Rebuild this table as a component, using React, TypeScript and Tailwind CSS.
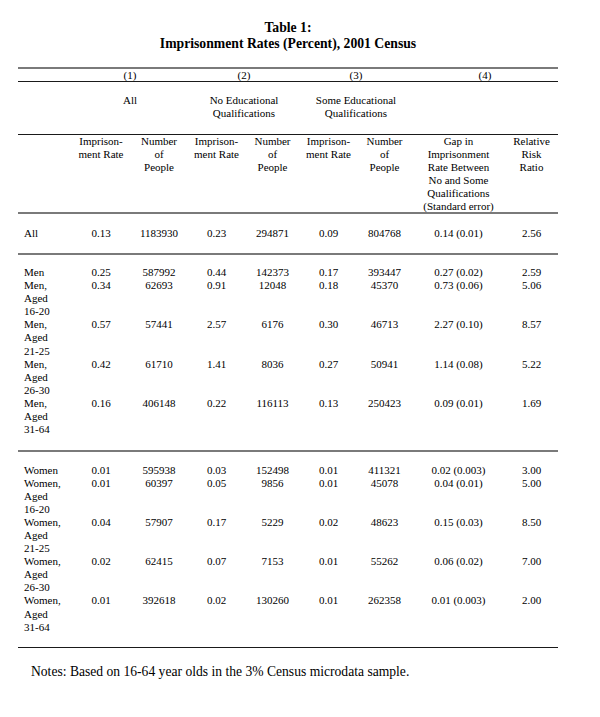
import React from "react";

const cols = "grid grid-cols-[54px_58px_58px_57px_55px_57px_55px_93px_53px]";

type Row = { label: string[]; v: string[] };

const men: Row[] = [
  { label: ["Men"], v: ["0.25", "587992", "0.44", "142373", "0.17", "393447", "0.27 (0.02)", "2.59"] },
  { label: ["Men,", "Aged", "16-20"], v: ["0.34", "62693", "0.91", "12048", "0.18", "45370", "0.73 (0.06)", "5.06"] },
  { label: ["Men,", "Aged", "21-25"], v: ["0.57", "57441", "2.57", "6176", "0.30", "46713", "2.27 (0.10)", "8.57"] },
  { label: ["Men,", "Aged", "26-30"], v: ["0.42", "61710", "1.41", "8036", "0.27", "50941", "1.14 (0.08)", "5.22"] },
  { label: ["Men,", "Aged", "31-64"], v: ["0.16", "406148", "0.22", "116113", "0.13", "250423", "0.09 (0.01)", "1.69"] },
];

const women: Row[] = [
  { label: ["Women"], v: ["0.01", "595938", "0.03", "152498", "0.01", "411321", "0.02 (0.003)", "3.00"] },
  { label: ["Women,", "Aged", "16-20"], v: ["0.01", "60397", "0.05", "9856", "0.01", "45078", "0.04 (0.01)", "5.00"] },
  { label: ["Women,", "Aged", "21-25"], v: ["0.04", "57907", "0.17", "5229", "0.02", "48623", "0.15 (0.03)", "8.50"] },
  { label: ["Women,", "Aged", "26-30"], v: ["0.02", "62415", "0.07", "7153", "0.01", "55262", "0.06 (0.02)", "7.00"] },
  { label: ["Women,", "Aged", "31-64"], v: ["0.01", "392618", "0.02", "130260", "0.01", "262358", "0.01 (0.003)", "2.00"] },
];

function DataRow({ r }: { r: Row }) {
  return (
    <div className={`${cols} leading-[13.1px]`}>
      <div className="pl-[6px]">
        {r.label.map((l, i) => (
          <div key={i}>{l}</div>
        ))}
      </div>
      {r.v.map((x, i) => (
        <div key={i} className="text-center whitespace-nowrap">
          {x}
        </div>
      ))}
    </div>
  );
}

function Center({ lines }: { lines: string[] }) {
  return (
    <div className="text-center">
      {lines.map((l, i) => (
        <div key={i} className="whitespace-nowrap">{l}</div>
      ))}
    </div>
  );
}

export default function App() {
  return (
    <div className="w-[600px] h-[717px] bg-white text-black font-['Liberation_Serif','Times_New_Roman',serif]">
      <div className="ml-[18px] w-[540px] pt-[20px]">
        <div className="text-center font-bold text-[13.7px] leading-[16px]">
          <div>Table 1:</div>
          <div>Imprisonment Rates (Percent), 2001 Census</div>
        </div>
        <div className="mt-[15px] text-[11px]">
          <div className="h-[2px] bg-[#7a7a7a]" />
          <div className="grid grid-cols-[54px_116px_112px_112px_146px] h-[12px] leading-[12px]">
            <div />
            <div className="text-center">(1)</div>
            <div className="text-center">(2)</div>
            <div className="text-center">(3)</div>
            <div className="text-center">(4)</div>
          </div>
          <div className="h-px bg-[#1a1a1a]" />
          <div className="grid grid-cols-[54px_116px_112px_112px_146px] h-[52px] pt-[12px] leading-[13px]">
            <div />
            <Center lines={["All"]} />
            <Center lines={["No Educational", "Qualifications"]} />
            <Center lines={["Some Educational", "Qualifications"]} />
            <div />
          </div>
          <div className="h-px bg-[#1a1a1a]" />
          <div className={`${cols} h-[77px] leading-[13px]`}>
            <div />
            <Center lines={["Imprison-", "ment Rate"]} />
            <Center lines={["Number", "of", "People"]} />
            <Center lines={["Imprison-", "ment Rate"]} />
            <Center lines={["Number", "of", "People"]} />
            <Center lines={["Imprison-", "ment Rate"]} />
            <Center lines={["Number", "of", "People"]} />
            <Center
              lines={[
                "Gap in",
                "Imprisonment",
                "Rate  Between",
                "No and Some",
                "Qualifications",
                "(Standard error)",
              ]}
            />
            <Center lines={["Relative", "Risk", "Ratio"]} />
          </div>
          <div className="h-[2px] bg-[#7a7a7a]" />
          <div className={`${cols} h-[39px] items-center`}>
            <div className="pl-[6px]">All</div>
            {["0.13", "1183930", "0.23", "294871", "0.09", "804768", "0.14 (0.01)", "2.56"].map((x, i) => (
              <div key={i} className="text-center">{x}</div>
            ))}
          </div>
          <div className="h-[2px] bg-[#7a7a7a]" />
          <div className="h-[195px] pt-[11px]">
            {men.map((r, i) => (
              <DataRow key={i} r={r} />
            ))}
          </div>
          <div className="h-[2px] bg-[#7a7a7a]" />
          <div className="h-[195px] pt-[11.5px]">
            {women.map((r, i) => (
              <DataRow key={i} r={r} />
            ))}
          </div>
          <div className="h-px bg-[#1a1a1a]" />
        </div>
        <div className="mt-[16px] pl-[13px] text-[13.6px] leading-[16px]">
          Notes: Based on 16-64 year olds in the 3% Census microdata sample.
        </div>
      </div>
    </div>
  );
}
